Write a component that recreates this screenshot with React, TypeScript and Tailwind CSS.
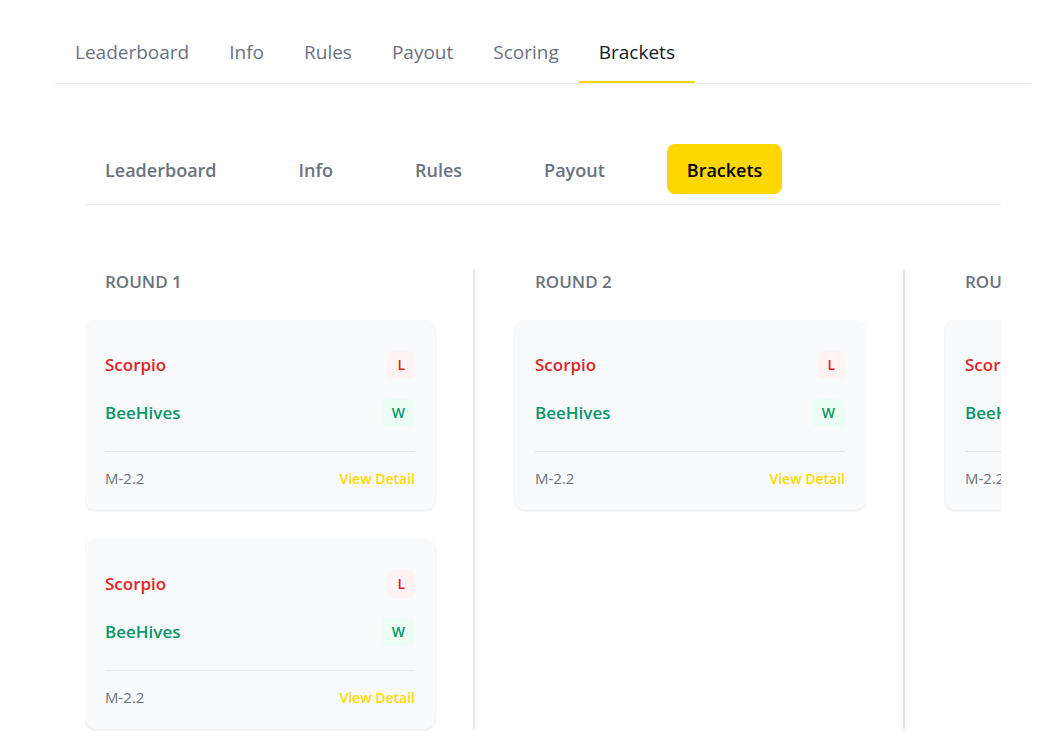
const tabs = ['Leaderboard', 'Info', 'Rules', 'Payout', 'Scoring', 'Brackets'];
const subTabs = ['Leaderboard', 'Info', 'Rules', 'Payout', 'Brackets'];
const rounds = [
  { name: 'ROUND 1', matches: ['M-2.2', 'M-2.2'] },
  { name: 'ROUND 2', matches: ['M-2.2'] },
  { name: 'ROUND 3', matches: ['M-2.2'] },
];

function MatchCard({ id }: { id: string }) {
  return (
    <article className="w-[350px] rounded-[10px] bg-gray-50 px-5 pt-[21px] pb-5 shadow-[0_1px_3px_rgba(0,0,0,0.1)]">
      <div className="flex items-center justify-between py-2.5">
        <span className="text-[17px] leading-7 font-semibold text-[#dc2626]">Scorpio</span>
        <span className="rounded-md bg-[#fef2f2] px-2.5 text-sm leading-7 font-semibold text-[#dc2626]">L</span>
      </div>
      <div className="flex items-center justify-between py-2.5">
        <span className="text-[17px] leading-7 font-semibold text-[#059669]">BeeHives</span>
        <span className="rounded-md bg-[#ecfdf5] px-2.5 text-sm leading-7 font-semibold text-[#059669]">W</span>
      </div>
      <div className="mt-3.5 flex items-baseline justify-between border-t border-[#e5e7eb] pt-[15px]">
        <span className="text-[15px] leading-[22px] text-[#6b7280]">{id}</span>
        <a href="#detail" className="text-sm leading-[22px] font-semibold text-[#ffd700]">View Detail</a>
      </div>
    </article>
  );
}

export default function App() {
  return (
    <div className="bg-white pt-[23px] pr-6 pl-[55px] font-['Open_Sans','Noto_Sans',sans-serif]">
      <nav aria-label="Tournament" className="flex border-b border-[#e9eaec]">
        {tabs.map((tab) => (
          <button
            key={tab}
            type="button"
            className={
              tab === 'Brackets'
                ? 'border-b-2 border-[#ffd700] px-5 pt-[15px] pb-[15px] text-[19px] leading-7 text-[#111827]'
                : 'border-b-2 border-transparent px-5 pt-[15px] pb-[15px] text-[19px] leading-7 text-[#6b7280]'
            }
          >
            {tab}
          </button>
        ))}
      </nav>
      <main className="px-[30px] pt-[60px] pb-[15px]">
        <nav aria-label="Bracket sections" className="flex gap-[42px] border-b border-[#e5e7eb] pb-2.5">
          {subTabs.map((tab) => (
            <button
              key={tab}
              type="button"
              className={
                tab === 'Brackets'
                  ? 'rounded-lg bg-[#ffd700] px-5 pt-3 pb-2.5 text-lg leading-7 font-semibold text-black'
                  : 'rounded-lg px-5 pt-3 pb-2.5 text-lg leading-7 font-semibold text-[#6b7280]'
              }
            >
              {tab}
            </button>
          ))}
        </nav>
        <div className="mt-[65px] flex gap-10 overflow-x-auto overflow-y-hidden pb-1 [scrollbar-width:none]">
          {rounds.map((round) => (
            <section key={round.name} className="shrink-0 border-r-2 border-[#e5e7eb] pr-[38px]">
              <h2 className="px-5 pb-[26px] text-[17px] leading-6 font-semibold text-[#6b7280]">{round.name}</h2>
              <div className="flex flex-col gap-[29px]">
                {round.matches.map((id, i) => (
                  <MatchCard key={i} id={id} />
                ))}
              </div>
            </section>
          ))}
        </div>
      </main>
    </div>
  );
}
